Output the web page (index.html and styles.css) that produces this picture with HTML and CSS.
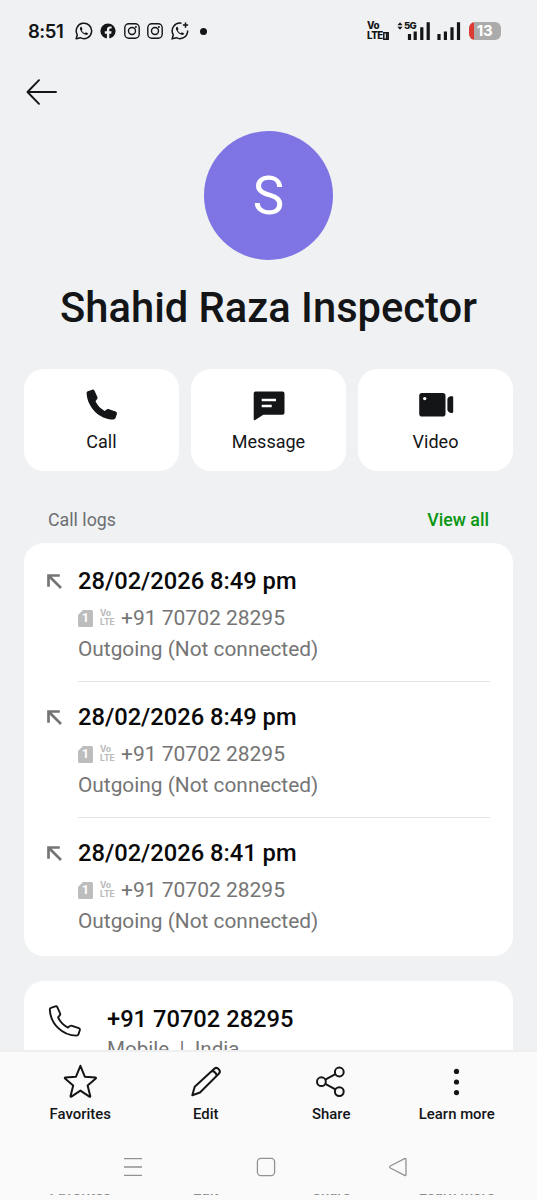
FILE: index.html
```html
<!DOCTYPE html>
<html lang="en">
<head>
<meta charset="utf-8">
<title>Contact</title>
<link rel="stylesheet" href="styles.css">
</head>
<body>
<svg class="defs" width="0" height="0">
  <symbol id="wa" viewBox="0 0 18 18"><path d="M1.200 16.800l1.100-4A7.700 7.700 0 1 1 5.300 15.700z" fill="none" stroke="currentColor" stroke-width="1.500" stroke-linejoin="round"/><path d="M6 4.800c-1 .4-1.300 1.600-.9 2.800 .9 2.500 3 4.500 5.500 5.200 1.300.3 2.400-.3 2.600-1.400l-2.300-1.200-1.100 1c-1.400-.6-2.500-1.700-3.100-3l.8-1-1-2.400z" fill="currentColor"/></symbol>
  <symbol id="ig" viewBox="0 0 16 16"><rect x=".8" y=".8" width="14.400" height="14.400" rx="4" fill="none" stroke="currentColor" stroke-width="1.400"/><circle cx="8" cy="8" r="3.500" fill="none" stroke="currentColor" stroke-width="1.400"/><circle cx="11.900" cy="4.100" r="1" fill="currentColor"/></symbol>
  <symbol id="out" viewBox="0 0 15 15"><path d="M14 14L2.500 2.500M1.500 12.800V1.500H12.800" fill="none" stroke="currentColor" stroke-width="2.700"/></symbol>
  <symbol id="sim" viewBox="0 0 15 17"><path d="M5 0h8.500A1.500 1.500 0 0 1 15 1.500v14a1.500 1.500 0 0 1-1.500 1.500h-12A1.500 1.500 0 0 1 0 15.500V5z" fill="#bdbdbd"/></symbol>
</svg>
<div class="phone">
  <header class="status">
    <span class="clock">8:51</span>
    <div class="notifs">
      <svg width="18" height="18"><use href="#wa"/></svg>
      <svg width="16" height="16" viewBox="0 0 16 16"><circle cx="8" cy="8" r="7.600" fill="currentColor"/><path d="M6.900 16v-5.300H4.800V8.200h2.100V6.700c0-2.200 1.200-3.300 3.100-3.300l1.600.1v2.100h-1c-1 0-1.300.5-1.300 1.200v1.400h2.300l-.4 2.500H9.300V16z" fill="#eff1f3"/></svg>
      <svg width="16" height="16"><use href="#ig"/></svg>
      <svg width="16" height="16"><use href="#ig"/></svg>
      <svg width="18" height="18" viewBox="0 0 18 18"><path d="M10.500 1.300A7.700 7.700 0 0 0 2.300 12.800l-1.100 4 4.100-1.100A7.700 7.700 0 0 0 16.600 8.500" fill="none" stroke="currentColor" stroke-width="1.500"/><path d="M6 4.800c-1 .4-1.300 1.600-.9 2.800 .9 2.500 3 4.500 5.500 5.200 1.300.3 2.400-.3 2.600-1.400l-2.300-1.200-1.100 1c-1.400-.6-2.500-1.700-3.100-3l.8-1-1-2.400z" fill="currentColor"/><path d="M14.500.5v5.200M11.900 3.100h5.200" stroke="currentColor" stroke-width="1.500"/></svg>
      <i class="dot"></i>
    </div>
    <div class="signals">
      <div class="volte"><span>Vo</span><span>LTE<svg width="6" height="8" viewBox="0 0 6 8"><path d="M.8.8h4.400v6.400H.8zM3.600 1v6" fill="none" stroke="currentColor" stroke-width="1.500"/></svg></span></div>
      <div class="net"><svg class="bars5g" width="34" height="20" viewBox="0 0 34 20"><path d="M.4 4.200L3 1.200l2.600 3zM.4 5.800L3 8.800l2.600-3z" fill="currentColor"/><path d="M12.500 19v-6M18.200 19v-8.500M24.800 19V6.300M31.200 19V1.300" stroke="currentColor" stroke-width="3.200"/></svg><span class="g5">5G</span></div>
      <svg class="bars" width="24" height="20" viewBox="0 0 24 20"><path d="M2 19v-6M8.400 19v-8.500M15 19V6.300M21.500 19V1.300" stroke="currentColor" stroke-width="3.200"/></svg>
      <div class="battery"><span>13</span></div>
    </div>
  </header>
  <nav class="back"><svg width="32" height="26" viewBox="0 0 32 26"><path d="M30 13H1.500M13 1.200L1.500 13 13 24.800" fill="none" stroke="currentColor" stroke-width="1.900" stroke-linecap="round" stroke-linejoin="round"/></svg></nav>
  <section class="profile">
    <div class="avatar">S</div>
    <h1>Shahid Raza Inspector</h1>
  </section>
  <section class="actions">
    <div class="action"><svg width="36" height="36" viewBox="0 0 36 36"><path d="M3.900 4.200L8.200 2.700c1-.3 1.900.1 2.300 1l2.800 6.100c.4.900.3 1.700-.3 2.400l-1.500 2c2 4.300 5.100 7.500 9.200 9.700l2-1.400c.7-.5 1.500-.6 2.300-.3l6.700 2.400c1 .4 1.500 1.300 1.200 2.300l-1.300 3.900c-.4 1.100-1.200 1.700-2.400 1.700C15.500 32.500 3.300 20.300 2.600 6.200c0-.9.400-1.700 1.300-2z" fill="currentColor"/></svg><span>Call</span></div>
    <div class="action"><svg width="36" height="36" viewBox="0 0 36 36"><path d="M4.500 4.500h27a2 2 0 0 1 2 2v19.300a2 2 0 0 1-2 2H12.300L4.200 33c-.8.500-1.500.2-1.500-.7V6.500a2 2 0 0 1 1.800-2z" fill="currentColor"/><path d="M10.700 13H25M10.700 19h10" stroke="#fff" stroke-width="2.300"/></svg><span>Message</span></div>
    <div class="action"><svg width="36" height="36" viewBox="0 0 36 36"><rect x="1.200" y="6" width="26.300" height="23.500" rx="2.800" fill="currentColor"/><path d="M34.200 9.300h-1.300c-1.900 0-3.500 1.400-3.500 3.300v10c0 1.900 1.600 3.300 3.500 3.300h1.300c.8 0 1-.5 1-1.200V10.500c0-.7-.2-1.200-1-1.200z" fill="currentColor"/><circle cx="6.700" cy="11.600" r="1.700" fill="#fff"/></svg><span>Video</span></div>
  </section>
  <div class="section-head"><span>Call logs</span><a>View all</a></div>
  <section class="logs">
    <article class="log"><svg class="arrow" width="15" height="15"><use href="#out"/></svg><div class="log-body"><h2>28/02/2026 8:49 pm</h2><p><span class="sim"><svg width="15" height="17"><use href="#sim"/></svg><b>1</b></span><span class="vo"><i>Vo</i><i>LTE</i></span><span class="num">+91 70702 28295</span></p><p class="result">Outgoing (Not connected)</p></div></article>
    <article class="log"><svg class="arrow" width="15" height="15"><use href="#out"/></svg><div class="log-body"><h2>28/02/2026 8:49 pm</h2><p><span class="sim"><svg width="15" height="17"><use href="#sim"/></svg><b>1</b></span><span class="vo"><i>Vo</i><i>LTE</i></span><span class="num">+91 70702 28295</span></p><p class="result">Outgoing (Not connected)</p></div></article>
    <article class="log"><svg class="arrow" width="15" height="15"><use href="#out"/></svg><div class="log-body"><h2>28/02/2026 8:41 pm</h2><p><span class="sim"><svg width="15" height="17"><use href="#sim"/></svg><b>1</b></span><span class="vo"><i>Vo</i><i>LTE</i></span><span class="num">+91 70702 28295</span></p><p class="result">Outgoing (Not connected)</p></div></article>
  </section>
  <section class="contact">
    <svg width="36" height="36" viewBox="0 0 36 36"><path d="M4.900 4.900L9.300 3.400c.9-.3 1.600 0 2 .8l2.700 6c.4.800.3 1.500-.3 2.200l-1.600 2c2 4.500 5.300 7.800 9.800 10.200l2.100-1.500c.6-.5 1.300-.6 2.100-.3l6.700 2.400c.9.300 1.300 1.100 1 2l-1.300 3.900c-.3.900-1 1.500-2 1.500C16.200 32.600 4.500 20.800 3.800 6.600c0-.8.300-1.400 1.100-1.700z" fill="none" stroke="currentColor" stroke-width="1.900" stroke-linejoin="round"/></svg>
    <div><h2>+91 70702 28295</h2><p>Mobile&nbsp; |&nbsp; India</p></div>
  </section>
  <footer class="toolbar">
    <div class="tools">
      <div class="tool"><svg width="36" height="36" viewBox="0 0 36 36"><path d="M18.400 2.800l4.400 10.900 10.800.9c.5.100.5.500.2.900l-8.200 7 2.700 10.700c0 .6-.4.800-.9.500l-9-6.100-9 6.100c-.5.300-.9 0-.9-.5l2.700-10.700-8.200-7c-.3-.4-.3-.8.200-.9l10.800-.9z" fill="none" stroke="currentColor" stroke-width="2" stroke-linejoin="round"/></svg><span>Favorites</span></div>
      <div class="tool"><svg width="36" height="36" viewBox="0 0 36 36"><path d="M4.300 32.200l2.400-8.500L26 6c1.500-1.300 3.500-1.200 4.700.1 1.300 1.300 1.400 3.300.1 4.700L12 29.500zM24 8c2.500.4 4.200 2.100 4.700 4.700" fill="none" stroke="currentColor" stroke-width="2" stroke-linejoin="round"/></svg><span>Edit</span></div>
      <div class="tool"><svg width="36" height="36" viewBox="0 0 36 36"><g fill="none" stroke="currentColor" stroke-width="2"><circle cx="8.400" cy="18.700" r="4.400"/><circle cx="26.300" cy="9" r="4.400"/><circle cx="26.300" cy="28.600" r="4.400"/><path d="M12.300 16.600l10.100-5.500M12.300 20.800l10.100 5.600"/></g></svg><span>Share</span></div>
      <div class="tool"><svg width="36" height="36" viewBox="0 0 36 36"><circle cx="17.500" cy="8.400" r="2.600" fill="currentColor"/><circle cx="17.500" cy="19" r="2.600" fill="currentColor"/><circle cx="17.500" cy="29.600" r="2.600" fill="currentColor"/></svg><span>Learn more</span></div>
    </div>
    <div class="sysnav">
      <svg width="20" height="20" viewBox="0 0 20 20"><path d="M1 1.700h18M1 10h18M1 18.300h18"/></svg>
      <svg width="20" height="20" viewBox="0 0 20 20"><rect x="1.400" y="1.400" width="17.200" height="17.200" rx="3.500"/></svg>
      <svg width="20" height="20" viewBox="0 0 20 20"><path d="M2.300 9L16.600 1.700c.8-.4 1.400-.1 1.400.8v15c0 .9-.6 1.200-1.400.8L2.300 11c-1-.6-1-1.400 0-2z"/></svg>
    </div>
    <div class="echo"><span>Favorites</span><span>Edit</span><span>Share</span><span>Learn more</span></div>
  </footer>
</div>
</body>
</html>
```
FILE: styles.css
```css
* { box-sizing: border-box; margin: 0; padding: 0; }
body { background: #eff1f3; font-family: Roboto, "Liberation Sans", sans-serif; color: #141517; }
svg { display: block; flex: none; }
.defs { position: absolute; }
i { font-style: normal; }
.phone { width: 537px; height: 1200px; overflow: hidden; display: flex; flex-direction: column; position: relative; }

.status { height: 62px; flex: none; padding: 0 36px 0 28px; display: flex; align-items: center; }
.clock { font: 600 18.500px/22px Inter, sans-serif; width: 36px; white-space: nowrap; letter-spacing: -.5px; }
.notifs { display: flex; align-items: center; gap: 7.400px; margin-left: 11px; }
.dot { width: 7px; height: 7px; border-radius: 50%; background: currentColor; margin-left: 4px; }
.signals { display: flex; align-items: center; margin-left: auto; }
.volte { font: 800 9.800px/10px Inter, sans-serif; width: 24px; }
.volte span { display: flex; align-items: center; letter-spacing: -.5px; }
.volte svg { margin-left: .6px; }
.net { position: relative; margin-left: 6px; }
.g5 { position: absolute; left: 7px; top: 0; font: 800 9.500px/10px Inter, sans-serif; letter-spacing: -.7px; }
.bars { margin-left: 6px; }
.battery { width: 32px; height: 18px; margin-left: 8px; border-radius: 6px; background: linear-gradient(90deg, #dc3b33 5px, #ababab 5px); color: #fff; text-align: center; font: 700 15px/18px Inter, sans-serif; letter-spacing: -.3px; padding-right: 1px; }

.back { height: 69px; flex: none; padding: 17px 0 0 26px; }
.profile { display: flex; flex-direction: column; align-items: center; flex: none; height: 238px; }
.avatar { width: 129px; height: 129px; border-radius: 50%; background: #7e74e3; color: #fff; font-size: 53px; line-height: 130px; text-align: center; }
h1 { font-size: 41.700px; font-weight: 500; line-height: 50px; margin-top: 23px; white-space: nowrap; }

.actions { display: grid; grid-template-columns: repeat(3, 1fr); gap: 12px; padding: 0 24px; flex: none; }
.action { height: 102px; background: #fff; border-radius: 20px; display: flex; flex-direction: column; align-items: center; padding-top: 18px; }
.action span { font-size: 18px; line-height: 24px; margin-top: 7px; }

.section-head { height: 72px; flex: none; padding: 37px 48px 0; display: flex; justify-content: space-between; font-size: 17.800px; line-height: 24px; color: #6d6e71; }
.section-head a { color: #09960f; font-weight: 500; }

.logs { height: 413px; flex: none; margin: 0 24px; padding: 3px 23px 2px 22px; background: #fff; border-radius: 20px; }
.log { display: flex; height: 136px; }
.arrow { margin: 28px 0 0 .5px; color: #757575; }
.log-body { flex: 1; margin-left: 16.500px; padding-top: 15px; border-bottom: 1px solid #e6e6e6; color: #757575; font-size: 21px; }
.log:last-child .log-body { border-bottom: 0; }
h2 { font-size: 23.700px; line-height: 41px; font-weight: 500; color: #090909; white-space: nowrap; }
.log p { height: 32px; line-height: 32px; display: flex; align-items: center; white-space: nowrap; }
.log .result { font-size: 20.850px; line-height: 30px; height: 30px; }
.sim { position: relative; }
.sim b { position: absolute; inset: 0; font-size: 12px; line-height: 17px; text-align: center; color: #fff; }
.vo { width: 16px; margin: 0 5px 0 7px; font: 700 8.600px/9px Inter, sans-serif; color: #b9b9b9; letter-spacing: -.2px; }
.vo i { display: block; height: 9px; }

.contact { height: 160px; flex: none; margin: 25px 24px 0; padding: 18px 22px; background: #fff; border-radius: 20px; display: flex; }
.contact svg { margin-top: 4px; }
.contact div { margin-left: 25px; }
.contact p { font-size: 20.600px; line-height: 24px; margin-top: -3px; color: #757575; }

.toolbar { position: absolute; left: 0; bottom: 0; width: 537px; height: 150px; background: #fafafa; border-top: 2px solid #eeeff1; }
.tools { display: grid; grid-template-columns: repeat(4, 1fr); padding: 11px 17.500px 0; }
.tool { display: flex; flex-direction: column; align-items: center; }
.tool span, .echo span { font-size: 14.900px; font-weight: 500; line-height: 20px; white-space: nowrap; }
.tool span { margin-top: 5px; }
.sysnav { display: flex; justify-content: space-between; padding: 33px 129px 0 123px; }
.sysnav svg { fill: none; stroke: #929292; stroke-width: 1.300; }
.echo { display: grid; grid-template-columns: repeat(4, 1fr); padding: 0 17.500px; height: 1px; margin-top: 17px; overflow: hidden; text-align: center; color: #8c8c8c; }
.echo span { margin-top: -14px; }
```
